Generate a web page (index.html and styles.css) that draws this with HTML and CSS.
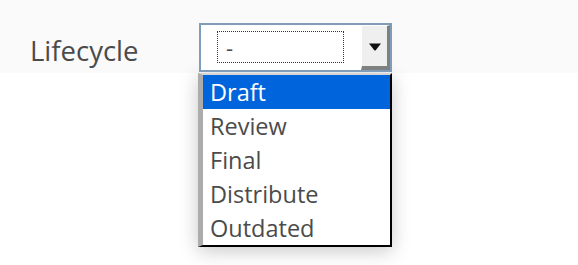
FILE: index.html
```html
<!DOCTYPE html>
<html lang="en">
<head>
    <meta charset="UTF-8">
    <meta name="viewport" content="width=device-width, initial-scale=1.0">
    <title>Lifecycle</title>
    <link rel="stylesheet" href="styles.css">
</head>
<body>
    <div class="field-row">
        <label class="field-label" for="lifecycle">Lifecycle</label>
        <!-- Open select, drawn by hand -->
        <div class="select-box" id="lifecycle">
            <div class="select-value"><span>-</span></div>
            <div class="select-button">
                <svg width="12" height="8" viewBox="0 0 12 8"><path d="M0 0.5 H12 L6.5 7.5 H5.5 Z" fill="#111"/></svg>
            </div>
        </div>
    </div>
    <div class="list-area">
        <ul class="select-list">
            <li class="selected">Draft</li>
            <li>Review</li>
            <li>Final</li>
            <li>Distribute</li>
            <li>Outdated</li>
        </ul>
    </div>
</body>
</html>
```

FILE: styles.css
```css
body {
    margin: 0;
    padding: 0;
    background-color: #fff;
    font-family: "Open Sans", "Noto Sans", sans-serif;
    color: #4b4b4b;
}
.field-row {
    display: flex;
    align-items: flex-start;
    height: 73px;
    padding: 23px 0 0 30px;
    background-color: #fafafa;
    box-sizing: border-box;
}
.field-label {
    width: 169px;
    margin-top: 9px;
    font-size: 27.5px;
    line-height: 38px;
}
.select-box {
    display: flex;
    width: 193px;
    height: 49px;
    border: 2px solid #7f9db9;
    background-color: #fff;
    box-sizing: border-box;
}
.select-value {
    flex: 1;
    padding: 6px 17px 5px 16px;
}
.select-value span {
    display: block;
    height: 32px;
    padding-left: 8px;
    border: 1px dotted #333;
    font-size: 22px;
    line-height: 30px;
    box-sizing: border-box;
}
.select-button {
    display: flex;
    align-items: center;
    justify-content: center;
    width: 29px;
    padding-top: 2px;
    background-color: #efefef;
    border-top: 1px solid #fff;
    border-left: 1px solid #fff;
    border-right: 3px solid #808080;
    border-bottom: 4px solid #808080;
    box-sizing: border-box;
}
.list-area {
    padding: 0 0 20px 198px;
}
.select-list {
    width: 194px;
    margin: 0;
    padding: 0;
    list-style: none;
    background-color: #fff;
    border-top: 2px solid #d6d6d6;
    border-left: 5px solid #acacac;
    border-right: 2px solid #000;
    border-bottom: 2px solid #000;
    box-shadow: 0 4px 18px rgba(0, 0, 0, 0.22);
    box-sizing: border-box;
}
.select-list li {
    height: 34px;
    padding-left: 7px;
    font-size: 23.5px;
    line-height: 34px;
}
.select-list li.selected {
    background-color: #0064dc;
    color: #fff;
}
```
